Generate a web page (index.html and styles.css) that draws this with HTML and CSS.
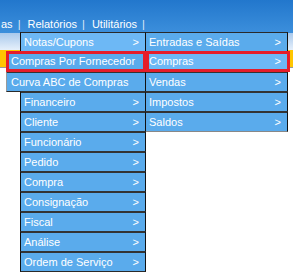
FILE: index.html
```html
<!DOCTYPE html>
<html lang="pt-BR">
<head>
  <meta charset="UTF-8" />
  <title>Menu Relatórios</title>
  <link rel="stylesheet" href="styles.css">
</head>
<body>
  <div class="topbar">
    <span>as</span><span class="sep">|</span><span>Relatórios</span><span class="sep">|</span><span>Utilitários</span><span class="sep">|</span>
  </div>
  <div class="band"></div>
  <div class="alert"></div>

  <div class="menu">
    <ul class="col col1">
      <li class="item hot">Notas/Cupons <span class="arrow">&gt;</span></li>
      <li class="item wide picked">Compras Por Fornecedor</li>
      <li class="item wide soft">Curva ABC de Compras</li>
      <li class="item">Financeiro <span class="arrow">&gt;</span></li>
      <li class="item">Cliente <span class="arrow">&gt;</span></li>
      <li class="item">Funcionário <span class="arrow">&gt;</span></li>
      <li class="item">Pedido <span class="arrow">&gt;</span></li>
      <li class="item">Compra <span class="arrow">&gt;</span></li>
      <li class="item">Consignação <span class="arrow">&gt;</span></li>
      <li class="item">Fiscal <span class="arrow">&gt;</span></li>
      <li class="item">Análise <span class="arrow">&gt;</span></li>
      <li class="item">Ordem de Serviço <span class="arrow">&gt;</span></li>
    </ul>

    <!-- submenu of Compras -->
    <ul class="col col2">
      <li class="item">Entradas e Saídas <span class="arrow">&gt;</span></li>
      <li class="item hot picked">Compras <span class="arrow">&gt;</span></li>
      <li class="item">Vendas <span class="arrow">&gt;</span></li>
      <li class="item">Impostos <span class="arrow">&gt;</span></li>
      <li class="item last">Saldos <span class="arrow">&gt;</span></li>
    </ul>
  </div>
</body>
</html>
```

FILE: styles.css
```css
body {
  margin: 0;
  font-family: "Liberation Sans", Arial, sans-serif;
  font-size: 11px;
  background: #fff;
  color: #fff;
}
.topbar {
  height: 33px;
  box-sizing: border-box;
  padding: 19px 0 0 1px;
  background: linear-gradient(#2277cc, #3c8fdc);
  display: flex;
  white-space: nowrap;
  line-height: 11px;
}
.topbar .sep {
  color: #dde9f6;
  padding: 0 7px 0 5px;
}
.band {
  height: 17px;
  background: linear-gradient(#a9c9ec, #e6f0fb);
}
.alert {
  height: 17px;
  background: #ffc600;
  border-bottom: 1px solid #999;
}

.menu {
  position: absolute;
  left: 20px;
  top: 32px;
}
.col {
  list-style: none;
  margin: 0;
  padding: 0;
}
.col1 {
  width: 126px;
}
.col2 {
  position: absolute;
  left: 126px;
  top: 0;
  width: 142px;
}
.item {
  box-sizing: border-box;
  height: 20px;
  line-height: 18px;
  padding: 0 0 0 3px;
  background: #5aabec;
  border: 1px solid #2a2a2a;
  border-left-color: #111;
  border-right-color: #111;
  display: flex;
  justify-content: space-between;
  white-space: nowrap;
}
.item + .item {
  margin-top: -1px;
  height: 21px;
  border-top-width: 2px;
  border-top-color: #333;
}
.col2 .item {
  border-left: none;
  padding-left: 3px;
}
.arrow {
  padding-right: 6px;
}
.hot {
  background: #6db8f5;
}
.wide {
  margin-left: -14px;
  padding-left: 2px;
}
.soft {
  border-left-color: #9a9a9a;
  padding-left: 4px;
}
.picked {
  position: relative;
  z-index: 1;
  border: 3px solid #e51d2a !important;
  line-height: 14px;
}
.col2 .picked {
  margin-right: -2px;
  padding-left: 0;
}
.last {
  border-bottom-color: #888;
}
```
